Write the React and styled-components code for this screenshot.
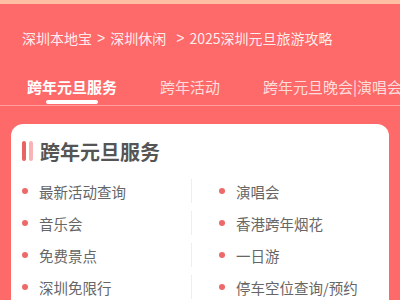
import React from "react";
import styled, { createGlobalStyle } from "styled-components";

const GlobalStyle = createGlobalStyle`
  body {
    margin: 0;
    background: #fe6a6a;
    font-family: "Noto Sans CJK SC", "Noto Sans", sans-serif;
  }
`;

const crumbs = ["深圳本地宝", "深圳休闲", "2025深圳元旦旅游攻略"];
const tabs = ["跨年元旦服务", "跨年活动", "跨年元旦晚会|演唱会"];
const services = [
  "最新活动查询",
  "演唱会",
  "音乐会",
  "香港跨年烟花",
  "免费景点",
  "一日游",
  "深圳免限行",
  "停车空位查询/预约",
];

class App extends React.Component {
  render() {
    return (
      <Page>
        <GlobalStyle />
        <TopStrip />
        <Breadcrumb>
          {crumbs.map((c, i) => (
            <React.Fragment key={c}>
              {i > 0 && <Sep wide={i === 2}>&gt;</Sep>}
              <span>{c}</span>
            </React.Fragment>
          ))}
        </Breadcrumb>
        <TabBar>
          {tabs.map((t, i) => (
            <Tab key={t} active={i === 0}>
              {t}
            </Tab>
          ))}
        </TabBar>
        <Card>
          <Title>
            <Bars>
              <Bar />
              <Bar light />
            </Bars>
            跨年元旦服务
          </Title>
          <List>
            {services.map((s, i) => (
              <Item key={s} right={i % 2 === 1}>
                <Dot />
                {s}
              </Item>
            ))}
          </List>
        </Card>
      </Page>
    );
  }
}

const Page = styled.div`
  width: 400px;
  height: 300px;
  overflow: hidden;
`;

const TopStrip = styled.div`
  height: 4px;
  background: #ffbfa2;
`;

const Breadcrumb = styled.div`
  display: flex;
  align-items: center;
  margin-top: 24px;
  padding-left: 22px;
  height: 20px;
  font-size: 14px;
  line-height: 20px;
  color: rgba(255, 255, 255, 0.9);
  white-space: nowrap;
`;

const Sep = styled.span`
  margin: 0 ${(p) => (p.wide ? "5px 0 10px" : "5px")};
  font-family: "Liberation Sans", sans-serif;
`;

const TabBar = styled.div`
  display: flex;
  margin-top: 23px;
  padding-left: 27px;
  gap: 43px;
  height: 34px;
  border-bottom: 1px solid rgba(255, 255, 255, 0.35);
  white-space: nowrap;
`;

const Tab = styled.div`
  position: relative;
  padding-top: 5px;
  font-size: 15px;
  line-height: 22px;
  font-weight: ${(p) => (p.active ? 700 : 400)};
  color: ${(p) => (p.active ? "#fff" : "rgba(255, 236, 236, 0.9)")};
  &::after {
    content: "";
    display: ${(p) => (p.active ? "block" : "none")};
    position: absolute;
    left: 50%;
    bottom: 1px;
    width: 52px;
    height: 4px;
    margin-left: -26px;
    border-radius: 2px;
    background: #fff;
  }
`;

const Card = styled.div`
  margin: 18px 11px 0;
  padding: 14px 0 20px 11px;
  background: #fff;
  border-radius: 12px;
  min-height: 200px;
`;

const Title = styled.div`
  display: flex;
  align-items: center;
  height: 26px;
  font-size: 20px;
  font-weight: 700;
  color: #555;
`;

const Bars = styled.div`
  display: flex;
  gap: 3px;
  margin-right: 7px;
`;

const Bar = styled.span`
  width: 4px;
  height: 20px;
  border-radius: 2px;
  background: ${(p) => (p.light ? "#f8b4b4" : "#e86464")};
`;

const List = styled.div`
  display: grid;
  grid-template-columns: 169px 1fr;
  row-gap: 8px;
  margin-top: 15px;
`;

const Item = styled.div`
  display: flex;
  align-items: center;
  height: 24px;
  font-size: 14.5px;
  color: #666;
  white-space: nowrap;
  border-left: ${(p) => (p.right ? "1px solid #eee" : "none")};
  padding-left: ${(p) => (p.right ? "27px" : "0")};
`;

const Dot = styled.span`
  width: 6px;
  height: 6px;
  border-radius: 50%;
  background: #ec6a6a;
  margin-right: 11px;
  flex-shrink: 0;
`;

export default App;
